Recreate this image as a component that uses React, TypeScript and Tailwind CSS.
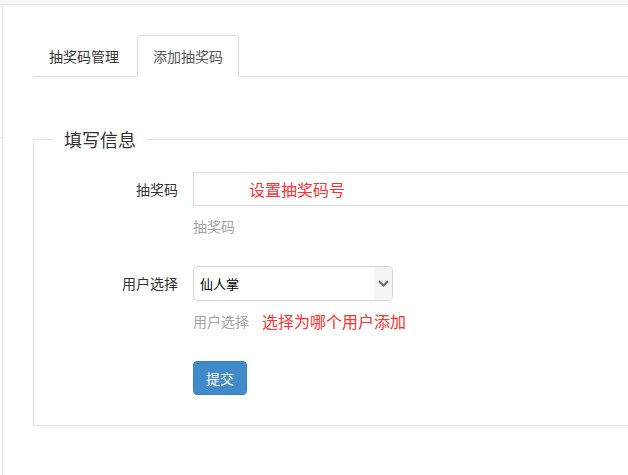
import React from "react";

export default function App() {
  return (
    <div
      className="w-[628px] h-[475px] overflow-hidden bg-white text-[#333]"
      style={{ fontFamily: '"Noto Sans CJK SC", "Microsoft YaHei", sans-serif' }}
    >
      <div className="h-[5px] bg-[#f7f7f7] border-b border-[#e4e4e8]" />
      <div className="flex h-[470px]">
        <div className="w-[2px] shrink-0">
          <div className="mt-[132px] border-t border-[#e3e3e3]" />
        </div>
        <div className="flex-1 border-l border-[#e6e6e6] pl-[30px] pt-[30px] min-w-[700px]">
          {/* Tabs */}
          <ul className="flex border-b border-[#dddddd] text-[14px] leading-[20px]">
            <li className="-mb-px mr-[2px]">
              <div className="px-[15px] py-[10px] border border-transparent text-[#333]">抽奖码管理</div>
            </li>
            <li className="-mb-px">
              <div className="px-[15px] py-[10px] border border-[#dddddd] border-b-white bg-white rounded-t-[4px] text-[#555]">
                添加抽奖码
              </div>
            </li>
          </ul>

          {/* Fieldset */}
          <fieldset className="mt-[50px] w-[660px] border border-[#e3e3e3] p-0 pb-[30px]">
            <legend className="ml-[19px] px-[11px] text-[18px] leading-[24px] text-[#333]">填写信息</legend>

            <div className="mt-[21px] flex items-start">
              <label className="w-[144px] text-right text-[14px] leading-[34px] text-[#333]">抽奖码</label>
              <div className="ml-[15px]">
                <div className="w-[480px] h-[34px] border border-[#dddddd] pl-[55px] text-[16px] leading-[32px] text-[#ff3030]">
                  设置抽奖码号
                </div>
                <div className="mt-[10px] text-[14px] leading-[20px] text-[#a3a3a3]">抽奖码</div>
              </div>
            </div>

            <div className="mt-[30px] flex items-start">
              <label className="w-[144px] text-right text-[14px] leading-[34px] text-[#333]">用户选择</label>
              <div className="ml-[15px]">
                <div className="w-[200px] h-[35px] border border-[#d4d4d4] rounded-[5px] flex overflow-hidden">
                  <div className="flex-1 pl-[6px] text-[13px] leading-[33px] text-black">仙人掌</div>
                  <div className="w-[18px] bg-[#f4f4f4] flex items-center justify-center">
                    <svg width="11" height="7" viewBox="0 0 11 7" fill="none">
                      <path d="M1 1.2 L5.5 5.5 L10 1.2" stroke="#6b6b6b" strokeWidth="2" />
                    </svg>
                  </div>
                </div>
                <div className="mt-[10px] flex items-center text-[14px] leading-[20px]">
                  <span className="text-[#a3a3a3]">用户选择</span>
                  <span className="ml-[13px] text-[16px] text-[#ff3030]">选择为哪个用户添加</span>
                </div>
                <button className="mt-[30px] h-[34px] px-[12px] border border-[#3a7fc0] bg-[#428bca] rounded-[4px] text-white text-[14px] leading-[20px]">
                  提交
                </button>
              </div>
            </div>
          </fieldset>
        </div>
      </div>
    </div>
  );
}
